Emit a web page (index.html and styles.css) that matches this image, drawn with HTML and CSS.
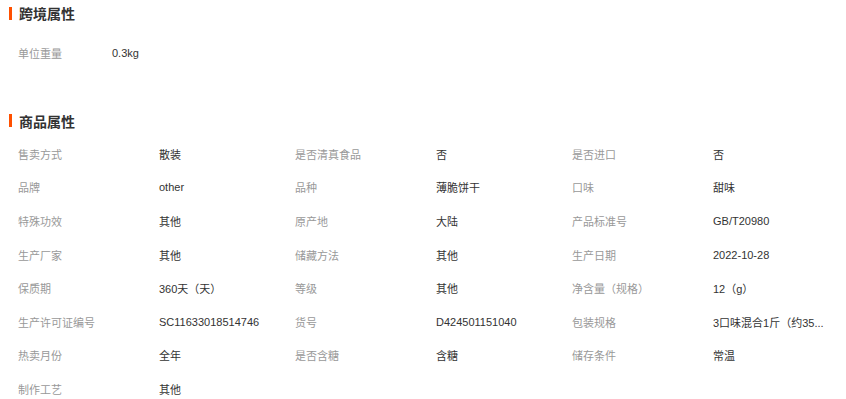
FILE: index.html
```html
<!DOCTYPE html>
<html lang="zh-CN">
<head>
<meta charset="utf-8">
<title>商品属性</title>
<link rel="stylesheet" href="styles.css">
</head>
<body>
<section class="attr-section">
  <h2 class="attr-title"><span class="bar"></span>跨境属性</h2>
  <div class="attr-list single">
    <div class="attr-item short"><span class="label">单位重量</span><span class="value">0.3kg</span></div>
  </div>
</section>
<section class="attr-section second">
  <h2 class="attr-title"><span class="bar"></span>商品属性</h2>
  <div class="attr-list">
    <div class="attr-item"><span class="label">售卖方式</span><span class="value">散装</span></div>
    <div class="attr-item"><span class="label">是否清真食品</span><span class="value">否</span></div>
    <div class="attr-item"><span class="label">是否进口</span><span class="value">否</span></div>
    <div class="attr-item"><span class="label">品牌</span><span class="value">other</span></div>
    <div class="attr-item"><span class="label">品种</span><span class="value">薄脆饼干</span></div>
    <div class="attr-item"><span class="label">口味</span><span class="value">甜味</span></div>
    <div class="attr-item"><span class="label">特殊功效</span><span class="value">其他</span></div>
    <div class="attr-item"><span class="label">原产地</span><span class="value">大陆</span></div>
    <div class="attr-item"><span class="label">产品标准号</span><span class="value">GB/T20980</span></div>
    <div class="attr-item"><span class="label">生产厂家</span><span class="value">其他</span></div>
    <div class="attr-item"><span class="label">储藏方法</span><span class="value">其他</span></div>
    <div class="attr-item"><span class="label">生产日期</span><span class="value">2022-10-28</span></div>
    <div class="attr-item"><span class="label">保质期</span><span class="value">360天（天）</span></div>
    <div class="attr-item"><span class="label">等级</span><span class="value">其他</span></div>
    <div class="attr-item"><span class="label">净含量（规格）</span><span class="value">12（g）</span></div>
    <div class="attr-item"><span class="label">生产许可证编号</span><span class="value">SC11633018514746</span></div>
    <div class="attr-item"><span class="label">货号</span><span class="value">D424501151040</span></div>
    <div class="attr-item"><span class="label">包装规格</span><span class="value">3口味混合1斤（约35...</span></div>
    <div class="attr-item"><span class="label">热卖月份</span><span class="value">全年</span></div>
    <div class="attr-item"><span class="label">是否含糖</span><span class="value">含糖</span></div>
    <div class="attr-item"><span class="label">储存条件</span><span class="value">常温</span></div>
    <div class="attr-item"><span class="label">制作工艺</span><span class="value">其他</span></div>
  </div>
</section>
</body>
</html>
```
FILE: styles.css
```css
html, body {
  margin: 0;
  padding: 0;
  background: #fff;
}
body {
  font-family: "Liberation Sans", "Noto Sans CJK SC", sans-serif;
  font-size: 11px;
  color: #333;
  padding-top: 3px;
  width: 846px;
  overflow: hidden;
}
.attr-title {
  margin: 0;
  display: flex;
  align-items: center;
  gap: 7px;
  padding-left: 9px;
  height: 20px;
  font-size: 14px;
  font-weight: bold;
  color: #333;
  font-family: "Noto Sans CJK SC", sans-serif;
}
.bar {
  width: 3px;
  height: 13px;
  background: #ff5000;
}
.attr-section.second {
  margin-top: 41px;
}
.attr-list {
  display: grid;
  grid-template-columns: repeat(3, 277px);
  grid-auto-rows: 33.6px;
  padding-left: 18px;
  margin-top: 6.5px;
}
.attr-list.single {
  margin-top: 13px;
}
.attr-item {
  display: flex;
  align-items: center;
  min-width: 0;
}
.label {
  flex: 0 0 141px;
  color: #999;
  white-space: nowrap;
}
.attr-item.short .label {
  flex-basis: 94px;
}
.value {
  color: #333;
  white-space: nowrap;
}
```
